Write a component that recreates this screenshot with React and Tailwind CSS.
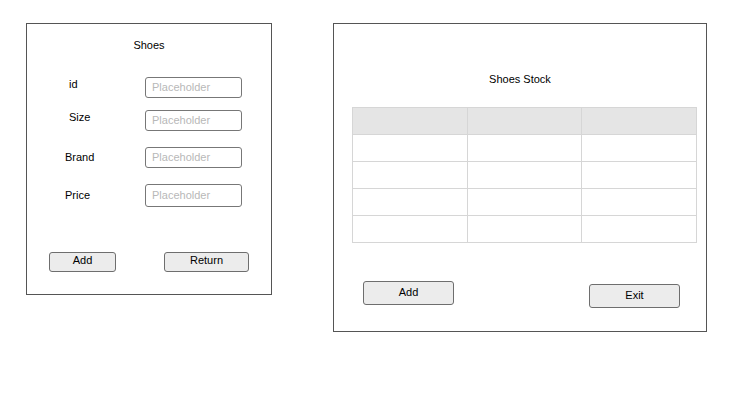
const font = { fontFamily: '"Liberation Sans", Arial, sans-serif' };

function Field({ label, labelClass, rowClass, inputClass }) {
  return (
    <div className={`flex items-center ${rowClass}`}>
      <span className={`w-[118px] text-[11px] leading-[14px] text-black ${labelClass}`}>{label}</span>
      <input
        placeholder="Placeholder"
        className={`w-[97px] rounded-[3px] border border-[#777] bg-white px-[6px] pb-[2px] text-[11px] text-black outline-none placeholder:text-[#b8b8b8] ${inputClass}`}
      />
    </div>
  );
}

function Button({ children, className }) {
  return (
    <button className={`flex justify-center rounded-[3px] border border-[#6e6e6e] bg-[#ececec] text-[11px] leading-[14px] text-black ${className}`}>
      {children}
    </button>
  );
}

export default function App() {
  return (
    <div className="min-h-screen bg-white" style={font}>
      <div className="flex items-start gap-[61px] pl-[26px] pt-[23px]">
        {/* form panel */}
        <div className="flex h-[272px] w-[246px] flex-col border border-[#555] bg-white">
          <div className="mt-[14px] text-center text-[11px] leading-[14px] text-black">Shoes</div>
          <Field label="id" rowClass="mt-[25px]" labelClass="pl-[42px] -mt-[8px]" inputClass="h-[21px]" />
          <Field label="Size" rowClass="mt-[12px]" labelClass="pl-[42px] -mt-[8px]" inputClass="h-[21px]" />
          <Field label="Brand" rowClass="mt-[16px]" labelClass="pl-[38px] -mt-[2px]" inputClass="h-[21px]" />
          <Field label="Price" rowClass="mt-[16px]" labelClass="pl-[38px] -mt-[2px]" inputClass="h-[23px]" />
          <div className="mt-[45px] flex items-start">
            <Button className="ml-[22px] h-[20px] w-[67px] items-start leading-[12px]">Add</Button>
            <Button className="ml-[48px] h-[20px] w-[85px] items-start leading-[12px]">Return</Button>
          </div>
        </div>

        {/* stock panel */}
        <div className="flex h-[309px] w-[374px] flex-col border border-[#555] bg-white">
          <div className="mt-[48px] text-center text-[11px] leading-[14px] text-black">Shoes Stock</div>
          <table className="ml-[18px] mt-[21px] w-[345px] table-fixed border-collapse">
            <tbody>
              <tr className="h-[27px] bg-[#e5e5e5]">
                <td className="border border-[#d6d6d6]"></td>
                <td className="border border-[#d6d6d6]"></td>
                <td className="border border-[#d6d6d6]"></td>
              </tr>
              {[0, 1, 2, 3].map((r) => (
                <tr key={r} className="h-[27px]">
                  <td className="border border-[#d6d6d6]"></td>
                  <td className="border border-[#d6d6d6]"></td>
                  <td className="border border-[#d6d6d6]"></td>
                </tr>
              ))}
            </tbody>
          </table>
          <div className="mt-[38px] flex items-start justify-between pl-[29px] pr-[26px]">
            <Button className="h-[24px] w-[91px] items-center pb-[3px]">Add</Button>
            <Button className="mt-[3px] h-[24px] w-[91px] items-center pb-[3px]">Exit</Button>
          </div>
        </div>
      </div>
    </div>
  );
}
